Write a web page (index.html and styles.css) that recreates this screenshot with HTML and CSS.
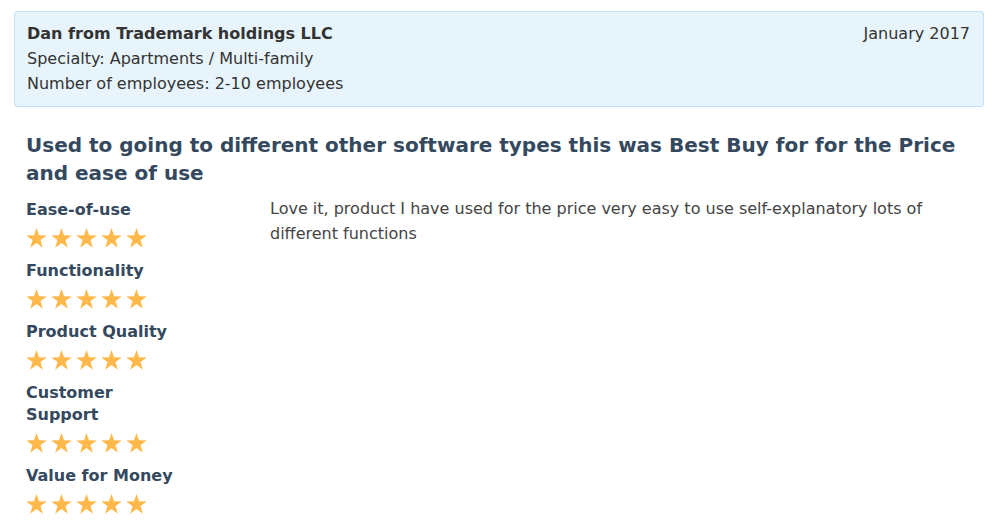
FILE: index.html
```html
<!DOCTYPE html>
<html>
<head>
<meta charset="utf-8">
<link rel="stylesheet" href="styles.css">
</head>
<body>
<div class="page">
  <div class="reviewer">
    <div class="reviewer-info">
      <div class="name">Dan from Trademark holdings LLC</div>
      <div class="meta">Specialty: Apartments / Multi-family</div>
      <div class="meta">Number of employees: 2-10 employees</div>
    </div>
    <div class="date">January 2017</div>
  </div>
  <h2 class="title">Used to going to different other software types this was Best Buy for for the Price and ease of use</h2>
  <div class="body">
    <div class="ratings">
      <div class="rating">
        <div class="label">Ease-of-use</div>
        <div class="stars"><span class="star"></span><span class="star"></span><span class="star"></span><span class="star"></span><span class="star"></span></div>
      </div>
      <div class="rating">
        <div class="label">Functionality</div>
        <div class="stars"><span class="star"></span><span class="star"></span><span class="star"></span><span class="star"></span><span class="star"></span></div>
      </div>
      <div class="rating">
        <div class="label">Product Quality</div>
        <div class="stars"><span class="star"></span><span class="star"></span><span class="star"></span><span class="star"></span><span class="star"></span></div>
      </div>
      <div class="rating">
        <div class="label">Customer Support</div>
        <div class="stars"><span class="star"></span><span class="star"></span><span class="star"></span><span class="star"></span><span class="star"></span></div>
      </div>
      <div class="rating">
        <div class="label">Value for Money</div>
        <div class="stars"><span class="star"></span><span class="star"></span><span class="star"></span><span class="star"></span><span class="star"></span></div>
      </div>
    </div>
    <p class="text">Love it, product I have used for the price very easy to use self-explanatory lots of different functions</p>
  </div>
</div>
</body>
</html>
```
FILE: styles.css
```css
html, body {
  margin: 0;
  padding: 0;
  background: #fff;
}
body {
  font-family: Verdana, "DejaVu Sans", sans-serif;
  font-size: 16px;
  color: #333;
}
.page {
  padding: 11px 12px 0 14px;
}
.reviewer {
  display: flex;
  justify-content: space-between;
  align-items: flex-start;
  background: #e8f4fc;
  border: 1px solid #c4e0f2;
  border-radius: 3px;
  padding: 9px 13px 10px 12px;
  line-height: 25px;
}
.name {
  font-weight: bold;
  color: #333;
}
.meta {
  color: #333;
}
.date {
  color: #333;
}
.title {
  margin: 24px 0 0 12px;
  font-size: 20px;
  line-height: 28px;
  font-weight: bold;
  color: #34495e;
}
.body {
  display: grid;
  grid-template-columns: 150px 1fr;
  column-gap: 94px;
  margin: 12px 0 0 12px;
}
.rating {
  margin-bottom: 11px;
}
.label {
  font-weight: bold;
  color: #34495e;
  line-height: 22px;
}
.stars {
  display: flex;
  gap: 4px;
  margin-top: 6px;
  height: 22px;
  align-items: center;
}
.star {
  width: 21px;
  height: 21px;
  background: #ffb84a;
  clip-path: polygon(50% 2%, 62% 37%, 99% 38%, 69% 60%, 80% 96%, 50% 74%, 20% 96%, 31% 60%, 1% 38%, 38% 37%);
}
.text {
  margin: -3px 0 0 0;
  line-height: 25px;
  color: #444;
}
```
